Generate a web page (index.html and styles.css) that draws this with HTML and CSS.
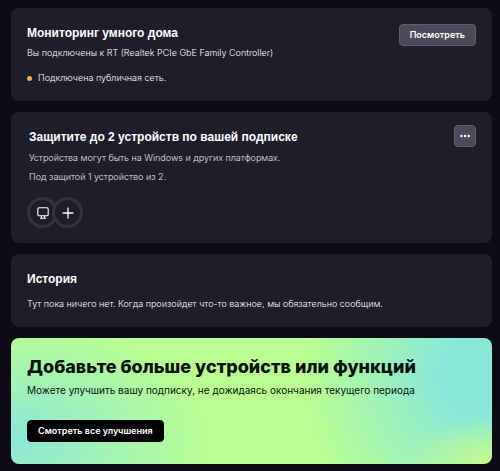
FILE: index.html
```html
<!DOCTYPE html>
<html lang="ru">
<head>
<meta charset="utf-8">
<meta name="viewport" content="width=device-width, initial-scale=1">
<title>Мониторинг</title>
<link rel="stylesheet" href="styles.css">
</head>
<body>
<main class="page">
  <section class="card network">
    <div class="card-body">
      <h2 class="title">Мониторинг умного дома</h2>
      <p class="text">Вы подключены к RT (Realtek PCIe GbE Family Controller)</p>
      <p class="text status"><span class="dot"></span>Подключена публичная сеть.</p>
    </div>
    <button class="btn" type="button">Посмотреть</button>
  </section>

  <section class="card devices">
    <div class="card-body">
      <h2 class="title">Защитите до 2 устройств по вашей подписке</h2>
      <p class="text muted">Устройства могут быть на Windows и других платформах.</p>
      <p class="text muted">Под защитой 1 устройство из 2.</p>
      <div class="device-list">
        <button class="device" type="button" aria-label="Компьютер">
          <svg viewBox="0 0 12 12" width="12" height="12" fill="none" stroke="currentColor" stroke-width="1.1">
            <rect x="0.8" y="0.8" width="10.4" height="8" rx="1.4"/>
            <path d="M4.4 8.8v2.2M7.6 8.8v2.2M3 11.2h6"/>
          </svg>
        </button>
        <button class="device" type="button" aria-label="Добавить устройство">
          <svg viewBox="0 0 12 12" width="12" height="12" fill="none" stroke="currentColor" stroke-width="1.3">
            <path d="M6 .6v10.8M.6 6h10.8"/>
          </svg>
        </button>
      </div>
    </div>
    <button class="btn btn-icon" type="button" aria-label="Ещё">
      <svg viewBox="0 0 10 4" width="10" height="4" fill="currentColor">
        <circle cx="1.4" cy="2" r="1.25"/><circle cx="5" cy="2" r="1.25"/><circle cx="8.6" cy="2" r="1.25"/>
      </svg>
    </button>
  </section>

  <section class="card history">
    <div class="card-body">
      <h2 class="title">История</h2>
      <p class="text">Тут пока ничего нет. Когда произойдет что-то важное, мы обязательно сообщим.</p>
    </div>
  </section>

  <section class="card banner">
    <h2 class="banner-title">Добавьте больше устройств или функций</h2>
    <p class="banner-text">Можете улучшить вашу подписку, не дожидаясь окончания текущего периода</p>
    <button class="btn btn-dark" type="button">Смотреть все улучшения</button>
  </section>
</main>
</body>
</html>
```
FILE: styles.css
```css
* { box-sizing: border-box; }

body {
  margin: 0;
  background: #0c0c14;
  color: #fff;
  font-family: Inter, sans-serif;
}

h2, p { margin: 0; }

.page {
  display: flex;
  flex-direction: column;
  gap: 11px;
  padding: 8px 8px 7px 11px;
}

.card {
  display: flex;
  align-items: flex-start;
  justify-content: space-between;
  padding: 16px;
  border-radius: 8px;
  background: #1f1d29;
}

.card-body {
  display: flex;
  flex-direction: column;
}

.title {
  font: 700 12px/18px "Liberation Sans", Arial, sans-serif;
}

.text {
  font-size: 9px;
  font-weight: 300;
  line-height: 14px;
  color: #fff;
}

.muted { color: #e2e1e8; }

.network .text { margin-top: 4px; }

.network .status {
  display: flex;
  align-items: center;
  gap: 6px;
  margin-top: 11px;
}

.dot {
  width: 5px;
  height: 5px;
  border-radius: 50%;
  background: #f2b353;
}

.btn {
  height: 22px;
  padding: 0 10px;
  border: 1px solid #5e5d6b;
  border-radius: 4px;
  background: #4b4a59;
  color: #fff;
  font: 600 9px/20px Inter, sans-serif;
}

.devices {
  padding: 13px 16px 15px 18px;
}

.devices .title { margin-top: 3px; }

.devices .text { margin-top: 5px; }

.btn-icon {
  display: grid;
  place-items: center;
  width: 22px;
  padding: 0;
}

.device-list {
  display: flex;
  margin: 13px 0 0 -2px;
}

.device {
  display: grid;
  place-items: center;
  width: 31px;
  height: 31px;
  padding: 0;
  border: 3px solid #33323f;
  border-radius: 50%;
  background: #1f1d29;
  color: #fff;
}

.device + .device { margin-left: -6px; }

.history .text { margin-top: 9px; }

.banner {
  flex-direction: column;
  justify-content: flex-start;
  padding: 16px 16px 22px;
  background:
    radial-gradient(90px 45px at 100% 100%, #c4fb8c 5%, rgba(190, 250, 145, 0) 100%),
    radial-gradient(170px 180px at 96% 30%, #8ae8d8 20%, rgba(138, 232, 216, 0) 100%),
    radial-gradient(200px 120px at 0 80%, #8ee8d6 5%, rgba(142, 232, 214, 0) 100%),
    #baff91;
  color: #06120b;
}

.banner-title {
  font-size: 18px;
  font-weight: 800;
  line-height: 26px;
}

.banner-text {
  margin-top: 2px;
  font-size: 10px;
  line-height: 16px;
}

.btn-dark {
  margin-top: 22px;
  border-color: #000;
  background: #000;
}
```
